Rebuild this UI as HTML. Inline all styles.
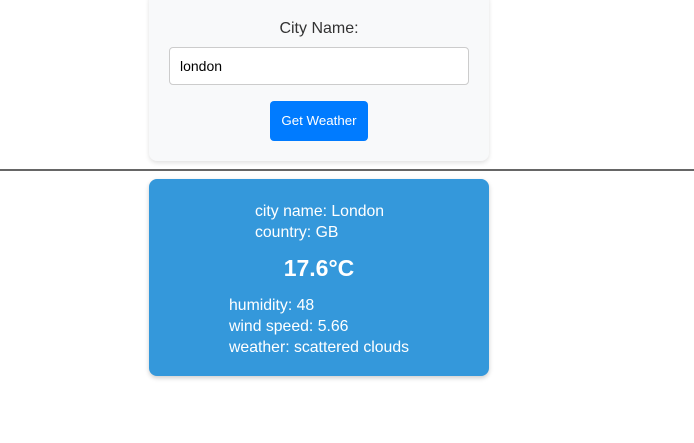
<!DOCTYPE html>
<html><head><style>
body{margin:0;width:694px;height:443px;background:#fff;font-family:"Segoe UI","Liberation Sans",sans-serif;position:relative;overflow:hidden}
.card1{position:absolute;left:149px;top:-8px;width:340px;height:169px;background:#f8f9fa;border-radius:8px;box-shadow:0 2px 5px rgba(0,0,0,.12)}
.lbl{position:absolute;left:149px;top:20px;width:340px;text-align:center;font-size:16px;color:#333}
.inp{position:absolute;left:169px;top:47px;width:298px;height:36px;border:1px solid #ccc;border-radius:4px;background:#fff;box-sizing:content-box}
.inp span{position:absolute;left:10px;top:10px;font-size:14px;color:#000}
.btn{position:absolute;left:270px;top:101px;width:98px;height:40px;background:#007bff;border-radius:4px;color:#fff;font-size:13.3px;text-align:center;line-height:40px}
.hr{position:absolute;left:0;top:169px;width:694px;height:2px;background:#666}
.card2{position:absolute;left:149px;top:179px;width:340px;height:197px;background:#3498db;border-radius:8px;box-shadow:0 2px 5px rgba(0,0,0,.2)}
.t{position:absolute;color:#fff;font-size:15.8px;line-height:21px;white-space:nowrap}
.temp{position:absolute;left:149px;top:255px;width:340px;text-align:center;color:#fff;font-weight:bold;font-size:23px}
</style></head><body>
<div class="card1"></div>
<div class="lbl">City Name:</div>
<div class="inp"><span>london</span></div>
<div class="btn">Get Weather</div>
<div class="hr"></div>
<div class="card2"></div>
<div class="t" style="left:255px;top:201px">city name: London<br>country: GB</div>
<div class="temp">17.6°C</div>
<div class="t" style="left:229px;top:295px">humidity: 48<br>wind speed: 5.66<br>weather: scattered clouds</div>
</body></html>
